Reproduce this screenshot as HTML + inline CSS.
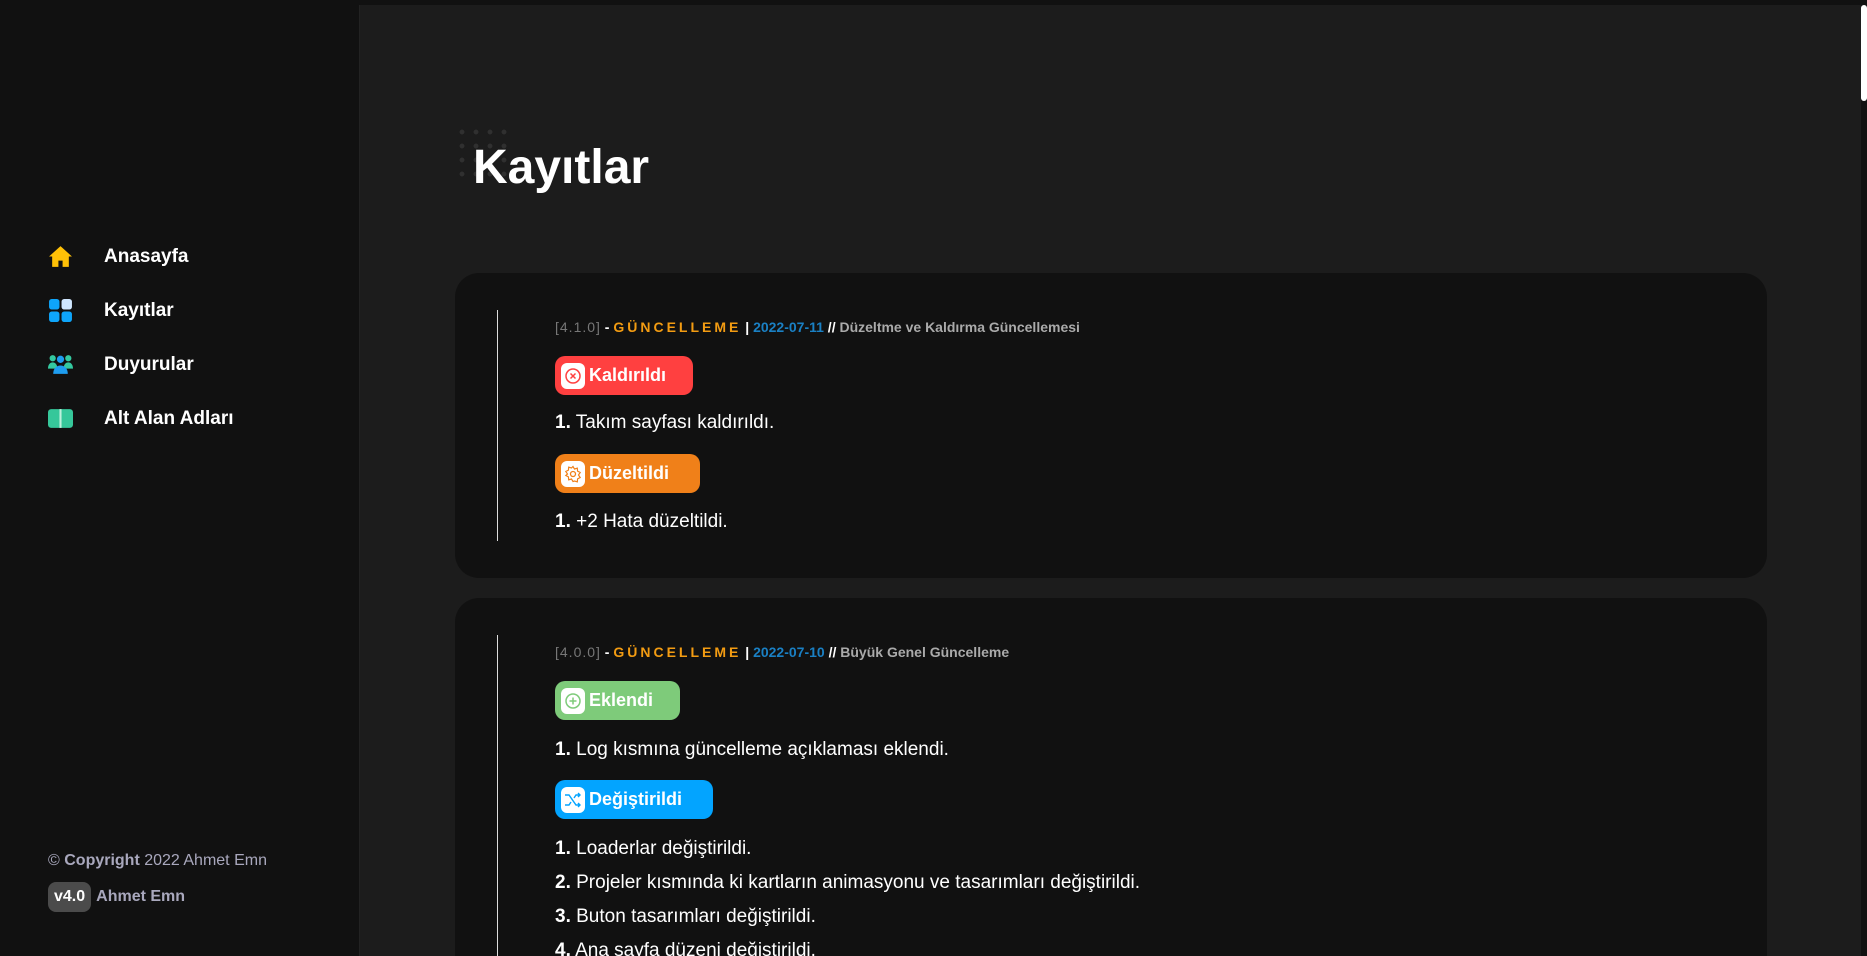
<!DOCTYPE html>
<html><head><meta charset="utf-8"><style>
*{margin:0;padding:0;box-sizing:border-box}
html,body{width:1867px;height:956px;overflow:hidden;background:#1c1c1c;font-family:"Liberation Sans",sans-serif;color:#fff;position:relative}
.top{position:absolute;left:0;top:0;width:1867px;height:5px;background:#111}
.side{position:absolute;left:0;top:5px;width:360px;height:951px;background:#111;border-right:1px solid #222}
.nav{position:absolute;left:48px;display:flex;align-items:center;font-weight:bold;font-size:19px}
.nav svg{width:25px;height:25px;margin-right:31px}
.copy{position:absolute;left:48px;top:847px;font-size:16px;color:#a9a8bd}
.ver{position:absolute;left:48px;top:877px;font-size:16px;color:#a9a8bd;font-weight:bold;display:flex;align-items:center}
.ver span{background:#4b4b4b;color:#fff;border-radius:8px;padding:6px 6px;margin-right:5px}
.sb{position:absolute;right:0;top:5px;width:6px;height:951px;background:#111}
.sb div{width:6px;height:96px;background:#fff;border-radius:3px}
h1{position:absolute;left:473px;top:140px;font-size:48px;font-weight:bold}
.dots{position:absolute;left:455px;top:125px;width:60px;height:60px;background-image:radial-gradient(circle,#303030 2.2px,transparent 2.6px);background-size:14px 14px}
.card{position:absolute;left:455px;width:1312px;background:#111;border-radius:24px;overflow:hidden}
.vl{position:absolute;left:42px;width:1px;background:#ddd}
.hd{position:absolute;left:100px;font-size:14px;font-weight:bold;white-space:nowrap}
.hd .v{color:#777;font-weight:normal;letter-spacing:1px}
.hd .g{color:#f39c12;letter-spacing:3px}
.hd .d{color:#1a80c4}
.hd .t{color:#aaa}
.bd{position:absolute;left:100px;height:39px;border-radius:10px;display:flex;align-items:center;padding:0 12px 0 6px;font-weight:bold;font-size:18px}
.bd i{width:24px;height:26px;background:#fff;border-radius:6px;margin-right:4px;display:flex;align-items:center;justify-content:center}
.ln{position:absolute;left:100px;font-size:19px;white-space:nowrap}
</style></head><body>
<div class="top"></div>
<div class="side">
<div class="nav" style="top:239px"><svg viewBox="0 0 24 24"><path d="M12 2L1 12h3v10h6v-6h4v6h6V12h3z" fill="#ffc107"/></svg>Anasayfa</div>
<div class="nav" style="top:293px"><svg viewBox="0 0 24 24"><rect x="1" y="1" width="10" height="10" rx="2.5" fill="#0ea5fa"/><rect x="13" y="1" width="10" height="10" rx="2.5" fill="#cfe6ff"/><rect x="1" y="13" width="10" height="10" rx="2.5" fill="#0ea5fa"/><rect x="13" y="13" width="10" height="10" rx="2.5" fill="#0ea5fa"/></svg>Kayıtlar</div>
<div class="nav" style="top:347px"><svg viewBox="0 0 24 24"><circle cx="4.5" cy="6" r="3" fill="#34c9a0"/><circle cx="19.5" cy="6" r="3" fill="#34c9a0"/><path d="M0 16c0-4 2-6 4.5-6s4.5 2 4.5 6zM15 16c0-4 2-6 4.5-6s4.5 2 4.5 6z" fill="#34c9a0"/><circle cx="12" cy="7" r="3.5" fill="#1e9df0"/><path d="M5 21c0-5 3-8 7-8s7 3 7 8z" fill="#1e9df0"/></svg>Duyurular</div>
<div class="nav" style="top:401px"><svg viewBox="0 0 24 24"><rect x="0" y="3" width="24" height="18" rx="3" fill="#36c79a"/><rect x="11" y="3" width="2" height="18" fill="#bff0dc"/></svg>Alt Alan Adları</div>
<div class="copy">© <b>Copyright</b> 2022 Ahmet Emn</div>
<div class="ver"><span>v4.0</span>Ahmet Emn</div>
</div>
<div class="sb"><div></div></div>
<div class="dots"></div>
<h1>Kayıtlar</h1>
<div class="card" style="top:273px;height:305px">
<div class="vl" style="top:37px;height:231px"></div>
<div class="hd" style="top:46px"><span class="v">[4.1.0]</span> - <span class="g">GÜNCELLEME</span> | <span class="d">2022-07-11</span> // <span class="t">Düzeltme ve Kaldırma Güncellemesi</span></div>
<div class="bd" style="top:83px;width:138px;background:#ff4040"><i><svg width="18" height="18" viewBox="0 0 18 18"><circle cx="9" cy="9" r="7" fill="none" stroke="#ff4040" stroke-width="1.5"/><path d="M6.5 6.5l5 5M11.5 6.5l-5 5" stroke="#ff4040" stroke-width="1.5"/></svg></i>Kaldırıldı</div>
<div class="ln" style="top:139px"><b>1.</b> Takım sayfası kaldırıldı.</div>
<div class="bd" style="top:181px;width:145px;background:#f08019"><i><svg width="18" height="18" viewBox="0 0 18 18"><circle cx="9" cy="9" r="2.5" fill="none" stroke="#f08019" stroke-width="1.3"/><path d="M9 1.5l1.5 2.5 2.8-.8.3 2.9 2.6 1.4-1.7 2.5 1.7 2.5-2.6 1.4-.3 2.9-2.8-.8L9 16.5l-1.5-2.5-2.8.8-.3-2.9L1.8 10.5 3.5 9 1.8 6.5l2.6-1.4.3-2.9 2.8.8z" fill="none" stroke="#f08019" stroke-width="1.2"/></svg></i>Düzeltildi</div>
<div class="ln" style="top:238px"><b>1.</b> +2 Hata düzeltildi.</div>
</div>
<div class="card" style="top:598px;height:358px;border-radius:24px 24px 0 0">
<div class="vl" style="top:37px;height:400px"></div>
<div class="hd" style="top:46px"><span class="v">[4.0.0]</span> - <span class="g">GÜNCELLEME</span> | <span class="d">2022-07-10</span> // <span class="t">Büyük Genel Güncelleme</span></div>
<div class="bd" style="top:83px;width:125px;background:#7ecb7a"><i><svg width="18" height="18" viewBox="0 0 18 18"><circle cx="9" cy="9" r="7" fill="none" stroke="#7ecb7a" stroke-width="1.5"/><path d="M9 5.5v7M5.5 9h7" stroke="#7ecb7a" stroke-width="1.5"/></svg></i>Eklendi</div>
<div class="ln" style="top:141px"><b>1.</b> Log kısmına güncelleme açıklaması eklendi.</div>
<div class="bd" style="top:182px;width:158px;background:#03a4ff"><i><svg width="18" height="18" viewBox="0 0 18 18"><path d="M1 4h4l7 10h4M1 14h4l2-3M10 7l2-3h4M14 2l2 2-2 2M14 12l2 2-2 2" fill="none" stroke="#03a4ff" stroke-width="1.4"/></svg></i>Değiştirildi</div>
<div class="ln" style="top:240px"><b>1.</b> Loaderlar değiştirildi.</div>
<div class="ln" style="top:274px"><b>2.</b> Projeler kısmında ki kartların animasyonu ve tasarımları değiştirildi.</div>
<div class="ln" style="top:308px"><b>3.</b> Buton tasarımları değiştirildi.</div>
<div class="ln" style="top:342px"><b>4.</b> Ana sayfa düzeni değiştirildi.</div>
</div>
</body></html>
